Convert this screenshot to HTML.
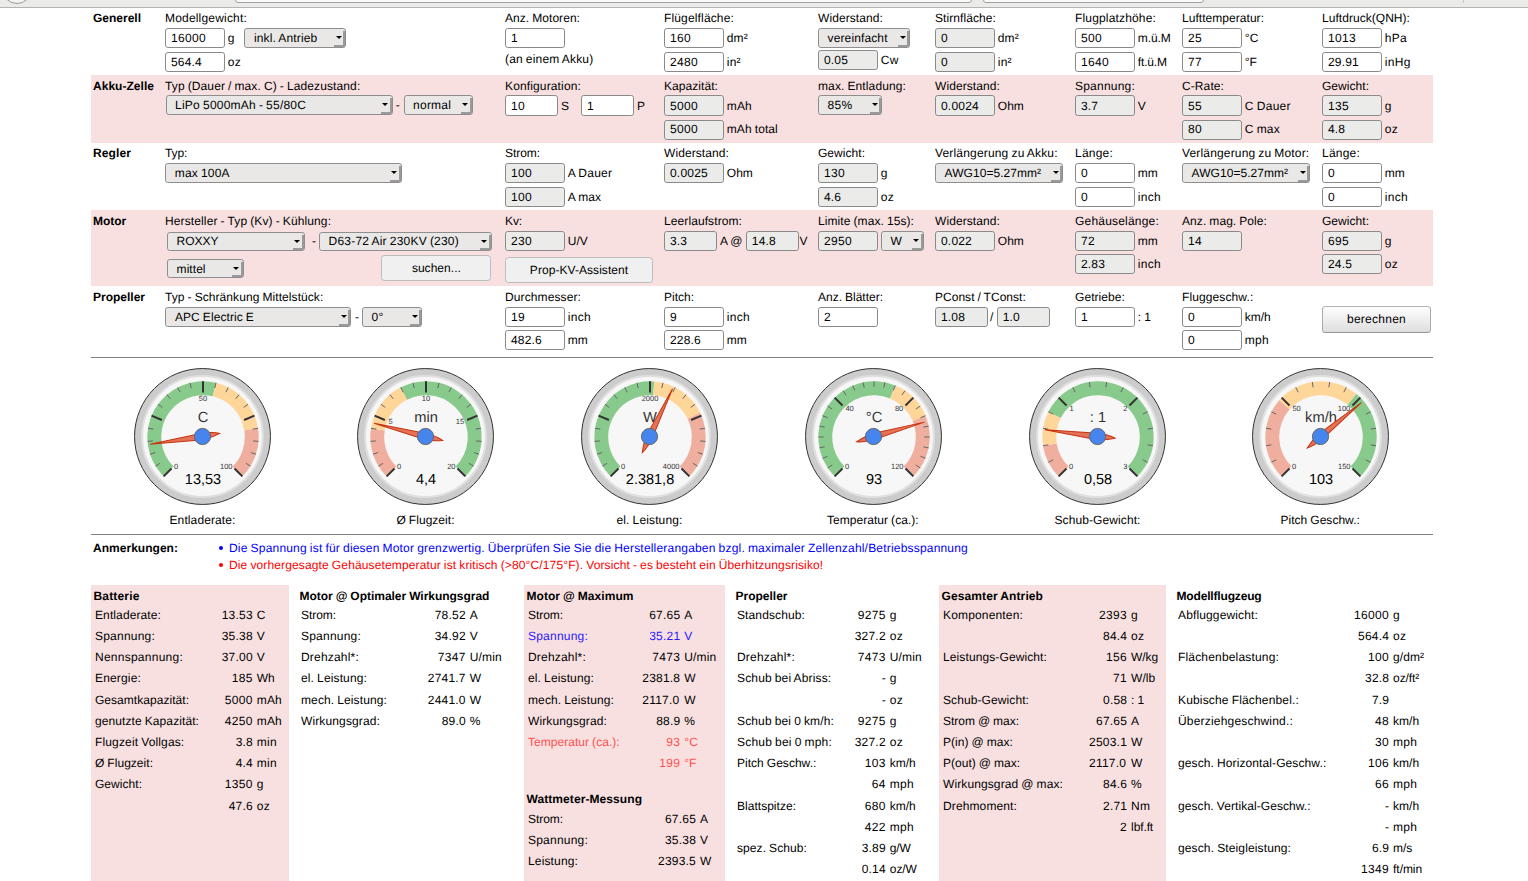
<!DOCTYPE html>
<html lang="de"><head><meta charset="utf-8"><title>propCalc</title>
<style>
html,body{margin:0;padding:0;background:#fff;}
body{width:1528px;height:881px;overflow:hidden;position:relative;font-family:"Liberation Sans",Arial,sans-serif;font-size:12px;line-height:14px;color:#000;text-rendering:geometricPrecision;font-kerning:normal;}
.t{position:absolute;white-space:pre;line-height:14px;}
.b{font-weight:bold;}
.box{position:absolute;}
.in{position:absolute;box-sizing:border-box;border:1px solid #8a8a8a;border-radius:2.8px;background:#fff;white-space:pre;overflow:hidden;}
.in.ro{background:#ebebea;}
.sel{position:absolute;box-sizing:border-box;border:1px solid #8e8e8e;border-radius:2.8px;background:#e9e8e6;white-space:pre;overflow:hidden;}
.sel i{position:absolute;right:3.2px;top:7.2px;width:0;height:0;border-left:3px solid transparent;border-right:3px solid transparent;border-top:3.7px solid #000;}
.sel b{position:absolute;right:0;top:1.5px;bottom:0;width:2px;background:#9a9a9a;}
.sel u{position:absolute;right:0;bottom:0;width:11px;height:1.6px;background:#9a9a9a;}
.btn{position:absolute;box-sizing:border-box;border:1px solid #bcbcbc;border-radius:3.5px;background:#f0f0f0;text-align:center;white-space:pre;}
.btn.g{background:linear-gradient(#fdfdfd,#f0f0f0 45%,#dedede);border-color:#b4b4b4 #aaaaaa #959595 #aaaaaa;}
.hr{position:absolute;left:91px;width:1342px;height:1px;background:#808080;}
.dot{position:absolute;width:4.5px;height:4.5px;border-radius:50%;}
#gauges{position:absolute;left:0;top:0;}
#chrome{position:absolute;left:0;top:0;width:1528px;height:7px;background:#ebebe9;border-bottom:1px solid #b4b4b4;overflow:hidden;}
#chrome .circ{position:absolute;left:2px;top:-26px;width:28px;height:28px;border:1px solid #9a9a9a;border-radius:50%;background:#f4f4f3;}
#chrome .url{position:absolute;top:-20px;height:20.5px;border:1px solid #a0a0a0;border-radius:3px;background:#fafafa;}
#chrome .sep{position:absolute;left:1463px;top:0;width:1px;height:3px;background:#c8c8c8;}
</style></head>
<body>
<div id="chrome"><div class="circ"></div><div class="url" style="left:235px;width:735px"></div><div class="url" style="left:983px;width:219px"></div><div class="sep"></div></div>
<div class="box" style="left:91px;top:75px;width:1342px;height:68px;background:#f8e0e0"></div>
<div class="box" style="left:91px;top:210px;width:1342px;height:76px;background:#f8e0e0"></div>
<span class="t b" style="left:93px;top:11px;letter-spacing:-0.003px;">Generell</span>
<span class="t" style="left:165px;top:11px;letter-spacing:0.188px;">Modellgewicht:</span>
<div class="in" style="left:165.2px;top:28px;width:59.6px;height:20px;line-height:18px;padding-left:4.8px;letter-spacing:0.326px;">16000</div>
<span class="t" style="left:227.8px;top:31px;letter-spacing:0.326px;">g</span>
<div class="in" style="left:165.2px;top:52px;width:59.6px;height:20px;line-height:18px;padding-left:4.8px;letter-spacing:0.194px;">564.4</div>
<span class="t" style="left:227.8px;top:55px;letter-spacing:0.163px;">oz</span>
<div class="sel" style="left:244.4px;top:28px;width:101.5px;height:20px;line-height:18px;padding-left:8.6px;letter-spacing:0.137px;word-spacing:-0.471px;">inkl. Antrieb<b></b><u></u><i></i></div>
<span class="t" style="left:505px;top:11px;letter-spacing:0.053px;word-spacing:-0.387px;">Anz. Motoren:</span>
<div class="in" style="left:505.2px;top:28px;width:59.6px;height:20px;line-height:18px;padding-left:4.8px;letter-spacing:0.326px;">1</div>
<span class="t" style="left:505px;top:52px;letter-spacing:0.177px;word-spacing:-0.511px;">(an einem Akku)</span>
<span class="t" style="left:664px;top:11px;letter-spacing:0.151px;">Flügelfläche:</span>
<div class="in" style="left:664.2px;top:28px;width:59.6px;height:20px;line-height:18px;padding-left:4.8px;letter-spacing:0.326px;">160</div>
<span class="t" style="left:726.8px;top:31px;letter-spacing:0.111px;">dm²</span>
<div class="in" style="left:664.2px;top:52px;width:59.6px;height:20px;line-height:18px;padding-left:4.8px;letter-spacing:0.326px;">2480</div>
<span class="t" style="left:726.8px;top:55px;letter-spacing:0.221px;">in²</span>
<span class="t" style="left:818px;top:11px;letter-spacing:0.089px;">Widerstand:</span>
<div class="sel" style="left:818px;top:28px;width:91.7px;height:20px;line-height:18px;padding-left:8.6px;letter-spacing:0.118px;">vereinfacht<b></b><u></u><i></i></div>
<div class="in ro" style="left:818.2px;top:50px;width:59.6px;height:20px;line-height:18px;padding-left:4.8px;letter-spacing:0.161px;">0.05</div>
<span class="t" style="left:880.8px;top:53px;letter-spacing:0.334px;">Cw</span>
<span class="t" style="left:935px;top:11px;letter-spacing:0.081px;">Stirnfläche:</span>
<div class="in ro" style="left:935.2px;top:28px;width:59.6px;height:20px;line-height:18px;padding-left:4.8px;letter-spacing:0.326px;">0</div>
<span class="t" style="left:997.8px;top:31px;letter-spacing:0.111px;">dm²</span>
<div class="in ro" style="left:935.2px;top:52px;width:59.6px;height:20px;line-height:18px;padding-left:4.8px;letter-spacing:0.326px;">0</div>
<span class="t" style="left:997.8px;top:55px;letter-spacing:0.221px;">in²</span>
<span class="t" style="left:1075px;top:11px;letter-spacing:0.163px;">Flugplatzhöhe:</span>
<div class="in" style="left:1075.2px;top:28px;width:59.6px;height:20px;line-height:18px;padding-left:4.8px;letter-spacing:0.326px;">500</div>
<span class="t" style="left:1137.8px;top:31px;letter-spacing:-0.067px;">m.ü.M</span>
<div class="in" style="left:1075.2px;top:52px;width:59.6px;height:20px;line-height:18px;padding-left:4.8px;letter-spacing:0.326px;">1640</div>
<span class="t" style="left:1137.8px;top:55px;letter-spacing:-0.168px;">ft.ü.M</span>
<span class="t" style="left:1182px;top:11px;letter-spacing:0.042px;">Lufttemperatur:</span>
<div class="in" style="left:1182.2px;top:28px;width:59.6px;height:20px;line-height:18px;padding-left:4.8px;letter-spacing:0.326px;">25</div>
<span class="t" style="left:1244.8px;top:31px;letter-spacing:0.268px;">°C</span>
<div class="in" style="left:1182.2px;top:52px;width:59.6px;height:20px;line-height:18px;padding-left:4.8px;letter-spacing:0.326px;">77</div>
<span class="t" style="left:1244.8px;top:55px;letter-spacing:-0.064px;">°F</span>
<span class="t" style="left:1322px;top:11px;letter-spacing:0.043px;">Luftdruck(QNH):</span>
<div class="in" style="left:1322.2px;top:28px;width:59.6px;height:20px;line-height:18px;padding-left:4.8px;letter-spacing:0.326px;">1013</div>
<span class="t" style="left:1384.8px;top:31px;letter-spacing:0.216px;">hPa</span>
<div class="in" style="left:1322.2px;top:52px;width:59.6px;height:20px;line-height:18px;padding-left:4.8px;letter-spacing:0.194px;">29.91</div>
<span class="t" style="left:1384.8px;top:55px;letter-spacing:0.330px;">inHg</span>
<span class="t b" style="left:93px;top:79px;letter-spacing:0.031px;">Akku-Zelle</span>
<span class="t" style="left:165px;top:79px;letter-spacing:0.112px;word-spacing:-0.446px;">Typ (Dauer / max. C) - Ladezustand:</span>
<div class="sel" style="left:165.5px;top:95px;width:227px;height:20px;line-height:18px;padding-left:8.6px;letter-spacing:0.218px;word-spacing:-0.552px;">LiPo 5000mAh - 55/80C<b></b><u></u><i></i></div>
<span class="t" style="left:395.8px;top:98px;letter-spacing:0.004px;">-</span>
<div class="sel" style="left:403.5px;top:95px;width:69px;height:20px;line-height:18px;padding-left:8.6px;letter-spacing:0.220px;">normal<b></b><u></u><i></i></div>
<span class="t" style="left:505px;top:79px;letter-spacing:0.139px;">Konfiguration:</span>
<div class="in" style="left:505.2px;top:95px;width:52.6px;height:21px;line-height:20px;padding-left:4.8px;letter-spacing:0.326px;">10</div>
<span class="t" style="left:561px;top:99px;letter-spacing:-0.004px;">S</span>
<div class="in" style="left:581.2px;top:95px;width:52.6px;height:21px;line-height:20px;padding-left:4.8px;letter-spacing:0.326px;">1</div>
<span class="t" style="left:637px;top:99px;letter-spacing:-0.004px;">P</span>
<span class="t" style="left:664px;top:79px;letter-spacing:0.063px;">Kapazität:</span>
<div class="in ro" style="left:664.2px;top:95px;width:59.6px;height:21px;line-height:20px;padding-left:4.8px;letter-spacing:0.326px;">5000</div>
<span class="t" style="left:726.8px;top:99px;letter-spacing:0.109px;">mAh</span>
<div class="in ro" style="left:664.2px;top:120px;width:59.6px;height:20px;line-height:16px;padding-left:4.8px;letter-spacing:0.326px;">5000</div>
<span class="t" style="left:726.8px;top:122px;letter-spacing:0.081px;word-spacing:-0.415px;">mAh total</span>
<span class="t" style="left:818px;top:79px;letter-spacing:0.115px;word-spacing:-0.449px;">max. Entladung:</span>
<div class="sel" style="left:818px;top:95px;width:64px;height:20px;line-height:18px;padding-left:8.6px;letter-spacing:0.327px;">85%<b></b><u></u><i></i></div>
<span class="t" style="left:935px;top:79px;letter-spacing:0.089px;">Widerstand:</span>
<div class="in ro" style="left:935.2px;top:95px;width:59.6px;height:21px;line-height:20px;padding-left:4.8px;letter-spacing:0.216px;">0.0024</div>
<span class="t" style="left:997.8px;top:99px;letter-spacing:-0.001px;">Ohm</span>
<span class="t" style="left:1075px;top:79px;letter-spacing:0.216px;">Spannung:</span>
<div class="in ro" style="left:1075.2px;top:95px;width:59.6px;height:21px;line-height:20px;padding-left:4.8px;letter-spacing:0.106px;">3.7</div>
<span class="t" style="left:1137.8px;top:99px;letter-spacing:-0.004px;">V</span>
<span class="t" style="left:1182px;top:79px;letter-spacing:0.094px;">C-Rate:</span>
<div class="in ro" style="left:1182.2px;top:95px;width:59.6px;height:21px;line-height:20px;padding-left:4.8px;letter-spacing:0.326px;">55</div>
<span class="t" style="left:1244.8px;top:99px;letter-spacing:0.275px;word-spacing:-0.609px;">C Dauer</span>
<div class="in ro" style="left:1182.2px;top:120px;width:59.6px;height:20px;line-height:16px;padding-left:4.8px;letter-spacing:0.326px;">80</div>
<span class="t" style="left:1244.8px;top:122px;letter-spacing:0.166px;word-spacing:-0.500px;">C max</span>
<span class="t" style="left:1322px;top:79px;letter-spacing:0.040px;">Gewicht:</span>
<div class="in ro" style="left:1322.2px;top:95px;width:59.6px;height:21px;line-height:20px;padding-left:4.8px;letter-spacing:0.326px;">135</div>
<span class="t" style="left:1384.8px;top:99px;letter-spacing:0.326px;">g</span>
<div class="in ro" style="left:1322.2px;top:120px;width:59.6px;height:20px;line-height:16px;padding-left:4.8px;letter-spacing:0.106px;">4.8</div>
<span class="t" style="left:1384.8px;top:122px;letter-spacing:0.163px;">oz</span>
<span class="t b" style="left:93px;top:146px;letter-spacing:0.109px;">Regler</span>
<span class="t" style="left:165px;top:146px;letter-spacing:-0.084px;">Typ:</span>
<div class="sel" style="left:165.2px;top:163px;width:236.4px;height:20px;line-height:18px;padding-left:8.6px;letter-spacing:0.186px;word-spacing:-0.520px;">max 100A<b></b><u></u><i></i></div>
<span class="t" style="left:505px;top:146px;letter-spacing:-0.056px;">Strom:</span>
<div class="in ro" style="left:505.2px;top:163px;width:59.6px;height:20px;line-height:18px;padding-left:4.8px;letter-spacing:0.326px;">100</div>
<span class="t" style="left:567.8px;top:166px;letter-spacing:0.219px;word-spacing:-0.553px;">A Dauer</span>
<div class="in ro" style="left:505.2px;top:187px;width:59.6px;height:20px;line-height:18px;padding-left:4.8px;letter-spacing:0.326px;">100</div>
<span class="t" style="left:567.8px;top:190px;letter-spacing:0.082px;word-spacing:-0.416px;">A max</span>
<span class="t" style="left:664px;top:146px;letter-spacing:0.089px;">Widerstand:</span>
<div class="in ro" style="left:664.2px;top:163px;width:59.6px;height:20px;line-height:18px;padding-left:4.8px;letter-spacing:0.216px;">0.0025</div>
<span class="t" style="left:726.8px;top:166px;letter-spacing:-0.001px;">Ohm</span>
<span class="t" style="left:818px;top:146px;letter-spacing:0.040px;">Gewicht:</span>
<div class="in ro" style="left:818.2px;top:163px;width:59.6px;height:20px;line-height:18px;padding-left:4.8px;letter-spacing:0.326px;">130</div>
<span class="t" style="left:880.8px;top:166px;letter-spacing:0.326px;">g</span>
<div class="in ro" style="left:818.2px;top:187px;width:59.6px;height:20px;line-height:18px;padding-left:4.8px;letter-spacing:0.106px;">4.6</div>
<span class="t" style="left:880.8px;top:190px;letter-spacing:0.163px;">oz</span>
<span class="t" style="left:935px;top:146px;letter-spacing:0.172px;word-spacing:-0.506px;">Verlängerung zu Akku:</span>
<div class="sel" style="left:935px;top:163px;width:128px;height:20px;line-height:18px;padding-left:8.6px;letter-spacing:0.049px;">AWG10=5.27mm²<b></b><u></u><i></i></div>
<span class="t" style="left:1075px;top:146px;letter-spacing:0.216px;">Länge:</span>
<div class="in" style="left:1075.2px;top:163px;width:59.6px;height:20px;line-height:18px;padding-left:4.8px;letter-spacing:0.326px;">0</div>
<span class="t" style="left:1137.8px;top:166px;letter-spacing:0.004px;">mm</span>
<div class="in" style="left:1075.2px;top:187px;width:59.6px;height:20px;line-height:18px;padding-left:4.8px;letter-spacing:0.326px;">0</div>
<span class="t" style="left:1137.8px;top:190px;letter-spacing:0.247px;">inch</span>
<span class="t" style="left:1182px;top:146px;letter-spacing:0.163px;word-spacing:-0.497px;">Verlängerung zu Motor:</span>
<div class="sel" style="left:1182px;top:163px;width:128px;height:20px;line-height:18px;padding-left:8.6px;letter-spacing:0.049px;">AWG10=5.27mm²<b></b><u></u><i></i></div>
<span class="t" style="left:1322px;top:146px;letter-spacing:0.216px;">Länge:</span>
<div class="in" style="left:1322.2px;top:163px;width:59.6px;height:20px;line-height:18px;padding-left:4.8px;letter-spacing:0.326px;">0</div>
<span class="t" style="left:1384.8px;top:166px;letter-spacing:0.004px;">mm</span>
<div class="in" style="left:1322.2px;top:187px;width:59.6px;height:20px;line-height:18px;padding-left:4.8px;letter-spacing:0.326px;">0</div>
<span class="t" style="left:1384.8px;top:190px;letter-spacing:0.247px;">inch</span>
<span class="t b" style="left:93px;top:214px;letter-spacing:-0.064px;">Motor</span>
<span class="t" style="left:165px;top:214px;letter-spacing:0.122px;word-spacing:-0.456px;">Hersteller - Typ (Kv) - Kühlung:</span>
<div class="sel" style="left:167px;top:232px;width:137.5px;height:19px;line-height:16px;padding-left:8.6px;letter-spacing:-0.002px;">ROXXY<b></b><u></u><i></i></div>
<span class="t" style="left:312px;top:234px;letter-spacing:0.004px;">-</span>
<div class="sel" style="left:319px;top:232px;width:172.5px;height:19px;line-height:16px;padding-left:8.6px;letter-spacing:0.207px;word-spacing:-0.541px;">D63-72 Air 230KV (230)<b></b><u></u><i></i></div>
<div class="sel" style="left:167px;top:259px;width:76.5px;height:19px;line-height:18px;padding-left:8.6px;letter-spacing:0.055px;">mittel<b></b><u></u><i></i></div>
<div class="btn " style="left:381.4px;top:255px;width:110px;height:26px;line-height:24px;letter-spacing:0.034px;">suchen...</div>
<span class="t" style="left:505px;top:214px;letter-spacing:-0.113px;">Kv:</span>
<div class="in ro" style="left:505.2px;top:231px;width:59.6px;height:20px;line-height:18px;padding-left:4.8px;letter-spacing:0.326px;">230</div>
<span class="t" style="left:567.8px;top:234px;letter-spacing:-0.001px;">U/V</span>
<div class="btn " style="left:505px;top:257px;width:148px;height:26px;line-height:24px;letter-spacing:0.057px;">Prop-KV-Assistent</div>
<span class="t" style="left:664px;top:214px;letter-spacing:0.093px;">Leerlaufstrom:</span>
<div class="in ro" style="left:664.2px;top:231px;width:52.6px;height:20px;line-height:18px;padding-left:4.8px;letter-spacing:0.106px;">3.3</div>
<span class="t" style="left:720px;top:234px;letter-spacing:-0.093px;word-spacing:-0.241px;">A @</span>
<div class="in ro" style="left:746px;top:231px;width:52.6px;height:20px;line-height:18px;padding-left:4.8px;letter-spacing:0.161px;">14.8</div>
<span class="t" style="left:799.5px;top:234px;letter-spacing:-0.004px;">V</span>
<span class="t" style="left:818px;top:214px;letter-spacing:0.082px;word-spacing:-0.416px;">Limite (max. 15s):</span>
<div class="in ro" style="left:818.2px;top:231px;width:59.6px;height:20px;line-height:18px;padding-left:4.8px;letter-spacing:0.326px;">2950</div>
<div class="sel" style="left:881px;top:231px;width:42.5px;height:20px;line-height:18px;padding-left:8.6px;letter-spacing:-0.326px;">W<b></b><u></u><i></i></div>
<span class="t" style="left:935px;top:214px;letter-spacing:0.089px;">Widerstand:</span>
<div class="in ro" style="left:935.2px;top:231px;width:59.6px;height:20px;line-height:18px;padding-left:4.8px;letter-spacing:0.194px;">0.022</div>
<span class="t" style="left:997.8px;top:234px;letter-spacing:-0.001px;">Ohm</span>
<span class="t" style="left:1075px;top:214px;letter-spacing:0.200px;">Gehäuselänge:</span>
<div class="in ro" style="left:1075.2px;top:231px;width:59.6px;height:20px;line-height:18px;padding-left:4.8px;letter-spacing:0.326px;">72</div>
<span class="t" style="left:1137.8px;top:234px;letter-spacing:0.004px;">mm</span>
<div class="in ro" style="left:1075.2px;top:254px;width:59.6px;height:20px;line-height:18px;padding-left:4.8px;letter-spacing:0.161px;">2.83</div>
<span class="t" style="left:1137.8px;top:257px;letter-spacing:0.247px;">inch</span>
<span class="t" style="left:1182px;top:214px;letter-spacing:0.074px;word-spacing:-0.408px;">Anz. mag. Pole:</span>
<div class="in ro" style="left:1182.2px;top:231px;width:59.6px;height:20px;line-height:18px;padding-left:4.8px;letter-spacing:0.326px;">14</div>
<span class="t" style="left:1322px;top:214px;letter-spacing:0.040px;">Gewicht:</span>
<div class="in ro" style="left:1322.2px;top:231px;width:59.6px;height:20px;line-height:18px;padding-left:4.8px;letter-spacing:0.326px;">695</div>
<span class="t" style="left:1384.8px;top:234px;letter-spacing:0.326px;">g</span>
<div class="in ro" style="left:1322.2px;top:254px;width:59.6px;height:20px;line-height:18px;padding-left:4.8px;letter-spacing:0.161px;">24.5</div>
<span class="t" style="left:1384.8px;top:257px;letter-spacing:0.163px;">oz</span>
<span class="t b" style="left:93px;top:290px;letter-spacing:-0.002px;">Propeller</span>
<span class="t" style="left:165px;top:290px;letter-spacing:0.075px;word-spacing:-0.409px;">Typ - Schränkung Mittelstück:</span>
<div class="sel" style="left:165.3px;top:307px;width:185.5px;height:20px;line-height:18px;padding-left:8.6px;letter-spacing:0.082px;word-spacing:-0.416px;">APC Electric E<b></b><u></u><i></i></div>
<span class="t" style="left:355px;top:310px;letter-spacing:0.004px;">-</span>
<div class="sel" style="left:362px;top:307px;width:60px;height:20px;line-height:18px;padding-left:8.6px;letter-spacing:0.264px;">0°<b></b><u></u><i></i></div>
<span class="t" style="left:505px;top:290px;letter-spacing:0.110px;">Durchmesser:</span>
<div class="in" style="left:505.2px;top:307px;width:59.6px;height:20px;line-height:18px;padding-left:4.8px;letter-spacing:0.326px;">19</div>
<span class="t" style="left:567.8px;top:310px;letter-spacing:0.247px;">inch</span>
<div class="in" style="left:505.2px;top:330px;width:59.6px;height:20px;line-height:18px;padding-left:4.8px;letter-spacing:0.194px;">482.6</div>
<span class="t" style="left:567.8px;top:333px;letter-spacing:0.004px;">mm</span>
<span class="t" style="left:664px;top:290px;letter-spacing:-0.002px;">Pitch:</span>
<div class="in" style="left:664.2px;top:307px;width:59.6px;height:20px;line-height:18px;padding-left:4.8px;letter-spacing:0.326px;">9</div>
<span class="t" style="left:726.8px;top:310px;letter-spacing:0.247px;">inch</span>
<div class="in" style="left:664.2px;top:330px;width:59.6px;height:20px;line-height:18px;padding-left:4.8px;letter-spacing:0.194px;">228.6</div>
<span class="t" style="left:726.8px;top:333px;letter-spacing:0.004px;">mm</span>
<span class="t" style="left:818px;top:290px;letter-spacing:-0.002px;word-spacing:-0.332px;">Anz. Blätter:</span>
<div class="in" style="left:818.2px;top:307px;width:59.6px;height:20px;line-height:18px;padding-left:4.8px;letter-spacing:0.326px;">2</div>
<span class="t" style="left:935px;top:290px;letter-spacing:0.022px;word-spacing:-0.356px;">PConst / TConst:</span>
<div class="in ro" style="left:935.2px;top:307px;width:52.6px;height:20px;line-height:18px;padding-left:4.8px;letter-spacing:0.161px;">1.08</div>
<span class="t" style="left:990px;top:310px;letter-spacing:-0.334px;">/</span>
<div class="in ro" style="left:997px;top:307px;width:52.6px;height:20px;line-height:18px;padding-left:4.8px;letter-spacing:0.106px;">1.0</div>
<span class="t" style="left:1075px;top:290px;letter-spacing:0.071px;">Getriebe:</span>
<div class="in" style="left:1075.2px;top:307px;width:59.6px;height:20px;line-height:18px;padding-left:4.8px;letter-spacing:0.326px;">1</div>
<span class="t" style="left:1137.8px;top:310px;letter-spacing:-0.004px;word-spacing:-0.330px;">: 1</span>
<span class="t" style="left:1182px;top:290px;letter-spacing:0.108px;">Fluggeschw.:</span>
<div class="in" style="left:1182.2px;top:307px;width:59.6px;height:20px;line-height:18px;padding-left:4.8px;letter-spacing:0.326px;">0</div>
<span class="t" style="left:1244.8px;top:310px;letter-spacing:-0.001px;">km/h</span>
<div class="in" style="left:1182.2px;top:330px;width:59.6px;height:20px;line-height:18px;padding-left:4.8px;letter-spacing:0.326px;">0</div>
<span class="t" style="left:1244.8px;top:333px;letter-spacing:0.219px;">mph</span>
<div class="btn g" style="left:1322px;top:306px;width:109px;height:27px;line-height:25px;letter-spacing:0.254px;">berechnen</div>
<div class="hr" style="top:357px"></div>
<div class="hr" style="top:534px"></div>
<svg id="gauges" width="1528" height="881" viewBox="0 0 1528 881" font-family="Liberation Sans, Arial, sans-serif"><g transform="translate(202.5,436.5)">
<circle r="67.95" fill="#cccccc" stroke="#333333" stroke-width="1"/>
<circle r="60.4" fill="#f7f7f7" stroke="#e0e0e0" stroke-width="2"/>
<g transform="translate(0.5,0.5)">
<path d="M-39.39,39.39A55.7,55.7 0 0 1 13.00,-54.16L9.76,-40.65A41.8,41.8 0 0 0 -29.56,29.56Z" fill="#88c98c"/>
<path d="M13.00,-54.16A55.7,55.7 0 0 1 55.01,-8.71L41.29,-6.54A41.8,41.8 0 0 0 9.76,-40.65Z" fill="#ffd699"/>
<path d="M55.01,-8.71A55.7,55.7 0 0 1 39.39,39.39L29.56,29.56A41.8,41.8 0 0 0 41.29,-6.54Z" fill="#f0ae9e"/>
<text y="-14.6" text-anchor="middle" font-size="14.7" fill="#333">C</text>
<path d="M-47.49,29.10L-42.89,26.28M-52.97,17.21L-47.84,15.54M-55.53,4.37L-50.14,3.95M-55.01,-8.71L-49.68,-7.87M-45.06,-32.74L-40.69,-29.57M-36.17,-42.35L-32.67,-38.25M-25.29,-49.63L-22.84,-44.82M-13.00,-54.16L-11.74,-48.91M13.00,-54.16L11.74,-48.91M25.29,-49.63L22.84,-44.82M36.17,-42.35L32.67,-38.25M45.06,-32.74L40.69,-29.57M55.01,-8.71L49.68,-7.87M55.53,4.37L50.14,3.95M52.97,17.21L47.84,15.54M47.49,29.10L42.89,26.28" stroke="#666666" stroke-width="1" fill="none"/>
<path d="M-39.39,39.39L-31.47,31.47M-51.46,-21.32L-41.11,-17.03M0.00,-55.70L0.00,-44.50M51.46,-21.32L41.11,-17.03M39.39,39.39L31.47,31.47" stroke="#333333" stroke-width="2" fill="none"/>
<text x="-29.0" y="32.1" text-anchor="start" font-size="7.5" fill="#333">0</text>
<text x="0.0" y="-36.0" text-anchor="middle" font-size="7.5" fill="#333">50</text>
<text x="29.5" y="32.1" text-anchor="end" font-size="7.5" fill="#333">100</text>
<text y="46.9" text-anchor="middle" font-size="14.5" fill="#000">13,53</text>
</g>
<g transform="rotate(-188.47)"><path d="M53.00,0 L0,3.2 C-6,3.2 -13,2.4 -17.6,0.5 C-13,-1 -6,-3.2 0,-3.2 Z" fill="#dc3912" fill-opacity="0.7" stroke="#c63310" stroke-width="1"/></g>
<circle r="8.1" fill="#4684ee" stroke="#666666" stroke-width="1"/>
</g>
<g transform="translate(425.5,436.5)">
<circle r="67.95" fill="#cccccc" stroke="#333333" stroke-width="1"/>
<circle r="60.4" fill="#f7f7f7" stroke="#e0e0e0" stroke-width="2"/>
<g transform="translate(0.5,0.5)">
<path d="M-39.39,39.39A55.7,55.7 0 0 1 -55.01,-8.71L-41.29,-6.54A41.8,41.8 0 0 0 -29.56,29.56Z" fill="#f0ae9e"/>
<path d="M-55.01,-8.71A55.7,55.7 0 0 1 -25.29,-49.63L-18.98,-37.24A41.8,41.8 0 0 0 -41.29,-6.54Z" fill="#ffd699"/>
<path d="M-25.29,-49.63A55.7,55.7 0 0 1 39.39,39.39L29.56,29.56A41.8,41.8 0 0 0 -18.98,-37.24Z" fill="#88c98c"/>
<text y="-14.6" text-anchor="middle" font-size="14.7" fill="#333">min</text>
<path d="M-47.49,29.10L-42.89,26.28M-52.97,17.21L-47.84,15.54M-55.53,4.37L-50.14,3.95M-55.01,-8.71L-49.68,-7.87M-45.06,-32.74L-40.69,-29.57M-36.17,-42.35L-32.67,-38.25M-25.29,-49.63L-22.84,-44.82M-13.00,-54.16L-11.74,-48.91M13.00,-54.16L11.74,-48.91M25.29,-49.63L22.84,-44.82M36.17,-42.35L32.67,-38.25M45.06,-32.74L40.69,-29.57M55.01,-8.71L49.68,-7.87M55.53,4.37L50.14,3.95M52.97,17.21L47.84,15.54M47.49,29.10L42.89,26.28" stroke="#666666" stroke-width="1" fill="none"/>
<path d="M-39.39,39.39L-31.47,31.47M-51.46,-21.32L-41.11,-17.03M0.00,-55.70L0.00,-44.50M51.46,-21.32L41.11,-17.03M39.39,39.39L31.47,31.47" stroke="#333333" stroke-width="2" fill="none"/>
<text x="-29.0" y="32.1" text-anchor="start" font-size="7.5" fill="#333">0</text>
<text x="-37.4" y="-13.0" text-anchor="start" font-size="7.5" fill="#333">5</text>
<text x="0.0" y="-36.0" text-anchor="middle" font-size="7.5" fill="#333">10</text>
<text x="38.2" y="-13.0" text-anchor="end" font-size="7.5" fill="#333">15</text>
<text x="29.5" y="32.1" text-anchor="end" font-size="7.5" fill="#333">20</text>
<text y="46.9" text-anchor="middle" font-size="14.5" fill="#000">4,4</text>
</g>
<g transform="rotate(-165.60)"><path d="M53.00,0 L0,3.2 C-6,3.2 -13,2.4 -17.6,0.5 C-13,-1 -6,-3.2 0,-3.2 Z" fill="#dc3912" fill-opacity="0.7" stroke="#c63310" stroke-width="1"/></g>
<circle r="8.1" fill="#4684ee" stroke="#666666" stroke-width="1"/>
</g>
<g transform="translate(649.5,436.5)">
<circle r="67.95" fill="#cccccc" stroke="#333333" stroke-width="1"/>
<circle r="60.4" fill="#f7f7f7" stroke="#e0e0e0" stroke-width="2"/>
<g transform="translate(0.5,0.5)">
<path d="M-39.39,39.39A55.7,55.7 0 0 1 4.26,-55.54L3.20,-41.68A41.8,41.8 0 0 0 -29.56,29.56Z" fill="#88c98c"/>
<path d="M4.26,-55.54A55.7,55.7 0 0 1 50.12,-24.31L37.61,-18.24A41.8,41.8 0 0 0 3.20,-41.68Z" fill="#ffd699"/>
<path d="M50.12,-24.31A55.7,55.7 0 0 1 39.39,39.39L29.56,29.56A41.8,41.8 0 0 0 37.61,-18.24Z" fill="#f0ae9e"/>
<text y="-14.6" text-anchor="middle" font-size="14.7" fill="#333">W</text>
<path d="M-47.49,29.10L-42.89,26.28M-52.97,17.21L-47.84,15.54M-55.53,4.37L-50.14,3.95M-55.01,-8.71L-49.68,-7.87M-45.06,-32.74L-40.69,-29.57M-36.17,-42.35L-32.67,-38.25M-25.29,-49.63L-22.84,-44.82M-13.00,-54.16L-11.74,-48.91M13.00,-54.16L11.74,-48.91M25.29,-49.63L22.84,-44.82M36.17,-42.35L32.67,-38.25M45.06,-32.74L40.69,-29.57M55.01,-8.71L49.68,-7.87M55.53,4.37L50.14,3.95M52.97,17.21L47.84,15.54M47.49,29.10L42.89,26.28" stroke="#666666" stroke-width="1" fill="none"/>
<path d="M-39.39,39.39L-31.47,31.47M-51.46,-21.32L-41.11,-17.03M0.00,-55.70L0.00,-44.50M51.46,-21.32L41.11,-17.03M39.39,39.39L31.47,31.47" stroke="#333333" stroke-width="2" fill="none"/>
<text x="-29.0" y="32.1" text-anchor="start" font-size="7.5" fill="#333">0</text>
<text x="0.0" y="-36.0" text-anchor="middle" font-size="7.5" fill="#333">2000</text>
<text x="29.5" y="32.1" text-anchor="end" font-size="7.5" fill="#333">4000</text>
<text y="46.9" text-anchor="middle" font-size="14.5" fill="#000">2.381,8</text>
</g>
<g transform="rotate(-64.23)"><path d="M53.00,0 L0,3.2 C-6,3.2 -13,2.4 -17.6,0.5 C-13,-1 -6,-3.2 0,-3.2 Z" fill="#dc3912" fill-opacity="0.7" stroke="#c63310" stroke-width="1"/></g>
<circle r="8.1" fill="#4684ee" stroke="#666666" stroke-width="1"/>
</g>
<g transform="translate(873.5,436.5)">
<circle r="67.95" fill="#cccccc" stroke="#333333" stroke-width="1"/>
<circle r="60.4" fill="#f7f7f7" stroke="#e0e0e0" stroke-width="2"/>
<g transform="translate(0.5,0.5)">
<path d="M-39.39,39.39A55.7,55.7 0 0 1 21.32,-51.46L16.00,-38.62A41.8,41.8 0 0 0 -29.56,29.56Z" fill="#88c98c"/>
<path d="M21.32,-51.46A55.7,55.7 0 0 1 51.46,-21.32L38.62,-16.00A41.8,41.8 0 0 0 16.00,-38.62Z" fill="#ffd699"/>
<path d="M51.46,-21.32A55.7,55.7 0 0 1 39.39,39.39L29.56,29.56A41.8,41.8 0 0 0 38.62,-16.00Z" fill="#f0ae9e"/>
<text y="-14.6" text-anchor="middle" font-size="14.7" fill="#333">°C</text>
<path d="M-46.31,30.95L-41.82,27.95M-51.46,21.32L-46.47,19.25M-54.63,10.87L-49.33,9.81M-55.70,-0.00L-50.30,-0.00M-54.63,-10.87L-49.33,-9.81M-51.46,-21.32L-46.47,-19.25M-46.31,-30.95L-41.82,-27.95M-30.95,-46.31L-27.95,-41.82M-21.32,-51.46L-19.25,-46.47M-10.87,-54.63L-9.81,-49.33M0.00,-55.70L0.00,-50.30M10.87,-54.63L9.81,-49.33M21.32,-51.46L19.25,-46.47M30.95,-46.31L27.95,-41.82M46.31,-30.95L41.82,-27.95M51.46,-21.32L46.47,-19.25M54.63,-10.87L49.33,-9.81M55.70,-0.00L50.30,-0.00M54.63,10.87L49.33,9.81M51.46,21.32L46.47,19.25M46.31,30.95L41.82,27.95" stroke="#666666" stroke-width="1" fill="none"/>
<path d="M-39.39,39.39L-31.47,31.47M-39.39,-39.39L-31.47,-31.47M39.39,-39.39L31.47,-31.47M39.39,39.39L31.47,31.47" stroke="#333333" stroke-width="2" fill="none"/>
<text x="-29.0" y="32.1" text-anchor="start" font-size="7.5" fill="#333">0</text>
<text x="-28.6" y="-26.4" text-anchor="start" font-size="7.5" fill="#333">40</text>
<text x="29.3" y="-26.4" text-anchor="end" font-size="7.5" fill="#333">80</text>
<text x="29.5" y="32.1" text-anchor="end" font-size="7.5" fill="#333">120</text>
<text y="46.9" text-anchor="middle" font-size="14.5" fill="#000">93</text>
</g>
<g transform="rotate(-15.75)"><path d="M53.00,0 L0,3.2 C-6,3.2 -13,2.4 -17.6,0.5 C-13,-1 -6,-3.2 0,-3.2 Z" fill="#dc3912" fill-opacity="0.7" stroke="#c63310" stroke-width="1"/></g>
<circle r="8.1" fill="#4684ee" stroke="#666666" stroke-width="1"/>
</g>
<g transform="translate(1097.5,436.5)">
<circle r="67.95" fill="#cccccc" stroke="#333333" stroke-width="1"/>
<circle r="60.4" fill="#f7f7f7" stroke="#e0e0e0" stroke-width="2"/>
<g transform="translate(0.5,0.5)">
<path d="M-39.39,39.39A55.7,55.7 0 0 1 -55.01,8.71L-41.29,6.54A41.8,41.8 0 0 0 -29.56,29.56Z" fill="#f0ae9e"/>
<path d="M-55.01,8.71A55.7,55.7 0 0 1 -49.63,-25.29L-37.24,-18.98A41.8,41.8 0 0 0 -41.29,6.54Z" fill="#ffd699"/>
<path d="M-49.63,-25.29A55.7,55.7 0 1 1 39.39,39.39L29.56,29.56A41.8,41.8 0 1 0 -37.24,-18.98Z" fill="#88c98c"/>
<text y="-14.6" text-anchor="middle" font-size="14.7" fill="#333">: 1</text>
<path d="M-49.63,25.29L-44.82,22.84M-55.01,8.71L-49.68,7.87M-55.01,-8.71L-49.68,-7.87M-49.63,-25.29L-44.82,-22.84M-25.29,-49.63L-22.84,-44.82M-8.71,-55.01L-7.87,-49.68M8.71,-55.01L7.87,-49.68M25.29,-49.63L22.84,-44.82M49.63,-25.29L44.82,-22.84M55.01,-8.71L49.68,-7.87M55.01,8.71L49.68,7.87M49.63,25.29L44.82,22.84" stroke="#666666" stroke-width="1" fill="none"/>
<path d="M-39.39,39.39L-31.47,31.47M-39.39,-39.39L-31.47,-31.47M39.39,-39.39L31.47,-31.47M39.39,39.39L31.47,31.47" stroke="#333333" stroke-width="2" fill="none"/>
<text x="-29.0" y="32.1" text-anchor="start" font-size="7.5" fill="#333">0</text>
<text x="-28.6" y="-26.4" text-anchor="start" font-size="7.5" fill="#333">1</text>
<text x="29.3" y="-26.4" text-anchor="end" font-size="7.5" fill="#333">2</text>
<text x="29.5" y="32.1" text-anchor="end" font-size="7.5" fill="#333">3</text>
<text y="46.9" text-anchor="middle" font-size="14.5" fill="#000">0,58</text>
</g>
<g transform="rotate(-172.80)"><path d="M53.00,0 L0,3.2 C-6,3.2 -13,2.4 -17.6,0.5 C-13,-1 -6,-3.2 0,-3.2 Z" fill="#dc3912" fill-opacity="0.7" stroke="#c63310" stroke-width="1"/></g>
<circle r="8.1" fill="#4684ee" stroke="#666666" stroke-width="1"/>
</g>
<g transform="translate(1320.5,436.5)">
<circle r="67.95" fill="#cccccc" stroke="#333333" stroke-width="1"/>
<circle r="60.4" fill="#f7f7f7" stroke="#e0e0e0" stroke-width="2"/>
<g transform="translate(0.5,0.5)">
<path d="M-39.39,39.39A55.7,55.7 0 0 1 -41.78,-36.84L-31.35,-27.64A41.8,41.8 0 0 0 -29.56,29.56Z" fill="#f0ae9e"/>
<path d="M-41.78,-36.84A55.7,55.7 0 0 1 35.50,-42.92L26.64,-32.21A41.8,41.8 0 0 0 -31.35,-27.64Z" fill="#ffd699"/>
<path d="M35.50,-42.92A55.7,55.7 0 0 1 39.39,39.39L29.56,29.56A41.8,41.8 0 0 0 26.64,-32.21Z" fill="#88c98c"/>
<text y="-14.6" text-anchor="middle" font-size="14.7" fill="#333">km/h</text>
<path d="M-49.63,25.29L-44.82,22.84M-55.01,8.71L-49.68,7.87M-55.01,-8.71L-49.68,-7.87M-49.63,-25.29L-44.82,-22.84M-25.29,-49.63L-22.84,-44.82M-8.71,-55.01L-7.87,-49.68M8.71,-55.01L7.87,-49.68M25.29,-49.63L22.84,-44.82M49.63,-25.29L44.82,-22.84M55.01,-8.71L49.68,-7.87M55.01,8.71L49.68,7.87M49.63,25.29L44.82,22.84" stroke="#666666" stroke-width="1" fill="none"/>
<path d="M-39.39,39.39L-31.47,31.47M-39.39,-39.39L-31.47,-31.47M39.39,-39.39L31.47,-31.47M39.39,39.39L31.47,31.47" stroke="#333333" stroke-width="2" fill="none"/>
<text x="-29.0" y="32.1" text-anchor="start" font-size="7.5" fill="#333">0</text>
<text x="-28.6" y="-26.4" text-anchor="start" font-size="7.5" fill="#333">50</text>
<text x="29.3" y="-26.4" text-anchor="end" font-size="7.5" fill="#333">100</text>
<text x="29.5" y="32.1" text-anchor="end" font-size="7.5" fill="#333">150</text>
<text y="46.9" text-anchor="middle" font-size="14.5" fill="#000">103</text>
</g>
<g transform="rotate(-39.60)"><path d="M53.00,0 L0,3.2 C-6,3.2 -13,2.4 -17.6,0.5 C-13,-1 -6,-3.2 0,-3.2 Z" fill="#dc3912" fill-opacity="0.7" stroke="#c63310" stroke-width="1"/></g>
<circle r="8.1" fill="#4684ee" stroke="#666666" stroke-width="1"/>
</g></svg>
<span class="t" style="left:169.5px;top:513px;letter-spacing:0.107px;">Entladerate:</span>
<span class="t" style="left:396.5px;top:513px;letter-spacing:0.031px;word-spacing:-0.365px;">Ø Flugzeit:</span>
<span class="t" style="left:616.5px;top:513px;letter-spacing:0.135px;word-spacing:-0.469px;">el. Leistung:</span>
<span class="t" style="left:827px;top:513px;letter-spacing:0.040px;word-spacing:-0.374px;">Temperatur (ca.):</span>
<span class="t" style="left:1054.5px;top:513px;letter-spacing:0.093px;">Schub-Gewicht:</span>
<span class="t" style="left:1280.5px;top:513px;letter-spacing:0.024px;word-spacing:-0.358px;">Pitch Geschw.:</span>
<span class="t b" style="left:93px;top:541px;letter-spacing:0.027px;">Anmerkungen:</span>
<div class="dot" style="left:218.5px;top:545.5px;background:#0000ff"></div>
<div class="dot" style="left:218.5px;top:562.5px;background:#ff0000"></div>
<span class="t" style="left:229px;top:541px;letter-spacing:0.193px;word-spacing:-0.527px;color:#0000ff">Die Spannung ist für diesen Motor grenzwertig. Überprüfen Sie Sie die Herstellerangaben bzgl. maximaler Zellenzahl/Betriebsspannung</span>
<span class="t" style="left:229px;top:558px;letter-spacing:0.134px;word-spacing:-0.468px;color:#ff0000">Die vorhergesagte Gehäusetemperatur ist kritisch (&gt;80°C/175°F). Vorsicht - es besteht ein Überhitzungsrisiko!</span>
<div class="box" style="left:91px;top:585px;width:198px;height:300px;background:#f8e0e0"></div>
<div class="box" style="left:524px;top:585px;width:201px;height:300px;background:#f8e0e0"></div>
<div class="box" style="left:939px;top:585px;width:227px;height:300px;background:#f8e0e0"></div>
<span class="t b" style="left:93.5px;top:589px;letter-spacing:0.165px;">Batterie</span>
<span class="t" style="left:95px;top:608px;letter-spacing:0.107px;">Entladerate:</span>
<span class="t" style="left:221.75px;top:608px;letter-spacing:0.194px;">13.53</span>
<span class="t" style="left:256.8px;top:608px;letter-spacing:0.334px;">C</span>
<span class="t" style="left:95px;top:629px;letter-spacing:0.216px;">Spannung:</span>
<span class="t" style="left:221.75px;top:629px;letter-spacing:0.194px;">35.38</span>
<span class="t" style="left:256.8px;top:629px;letter-spacing:-0.004px;">V</span>
<span class="t" style="left:95px;top:650px;letter-spacing:0.251px;">Nennspannung:</span>
<span class="t" style="left:221.75px;top:650px;letter-spacing:0.194px;">37.00</span>
<span class="t" style="left:256.8px;top:650px;letter-spacing:-0.004px;">V</span>
<span class="t" style="left:95px;top:671px;letter-spacing:0.163px;">Energie:</span>
<span class="t" style="left:231.75px;top:671px;letter-spacing:0.326px;">185</span>
<span class="t" style="left:256.8px;top:671px;letter-spacing:0.000px;">Wh</span>
<span class="t" style="left:95px;top:693px;letter-spacing:0.039px;">Gesamtkapazität:</span>
<span class="t" style="left:224.75px;top:693px;letter-spacing:0.326px;">5000</span>
<span class="t" style="left:256.8px;top:693px;letter-spacing:0.109px;">mAh</span>
<span class="t" style="left:95px;top:714px;letter-spacing:0.089px;word-spacing:-0.423px;">genutzte Kapazität:</span>
<span class="t" style="left:224.75px;top:714px;letter-spacing:0.326px;">4250</span>
<span class="t" style="left:256.8px;top:714px;letter-spacing:0.109px;">mAh</span>
<span class="t" style="left:95px;top:735px;letter-spacing:0.143px;word-spacing:-0.477px;">Flugzeit Vollgas:</span>
<span class="t" style="left:235.75px;top:735px;letter-spacing:0.106px;">3.8</span>
<span class="t" style="left:256.8px;top:735px;letter-spacing:0.221px;">min</span>
<span class="t" style="left:95px;top:756px;letter-spacing:0.031px;word-spacing:-0.365px;">Ø Flugzeit:</span>
<span class="t" style="left:235.75px;top:756px;letter-spacing:0.106px;">4.4</span>
<span class="t" style="left:256.8px;top:756px;letter-spacing:0.221px;">min</span>
<span class="t" style="left:95px;top:777px;letter-spacing:0.040px;">Gewicht:</span>
<span class="t" style="left:224.75px;top:777px;letter-spacing:0.326px;">1350</span>
<span class="t" style="left:256.8px;top:777px;letter-spacing:0.326px;">g</span>
<span class="t" style="left:228.75px;top:799px;letter-spacing:0.161px;">47.6</span>
<span class="t" style="left:256.8px;top:799px;letter-spacing:0.163px;">oz</span>
<span class="t b" style="left:299.5px;top:589px;letter-spacing:-0.026px;word-spacing:-0.308px;">Motor @ Optimaler Wirkungsgrad</span>
<span class="t" style="left:301px;top:608px;letter-spacing:-0.056px;">Strom:</span>
<span class="t" style="left:434.75px;top:608px;letter-spacing:0.194px;">78.52</span>
<span class="t" style="left:469.8px;top:608px;letter-spacing:-0.004px;">A</span>
<span class="t" style="left:301px;top:629px;letter-spacing:0.216px;">Spannung:</span>
<span class="t" style="left:434.75px;top:629px;letter-spacing:0.194px;">34.92</span>
<span class="t" style="left:469.8px;top:629px;letter-spacing:-0.004px;">V</span>
<span class="t" style="left:301px;top:650px;letter-spacing:0.197px;">Drehzahl*:</span>
<span class="t" style="left:437.75px;top:650px;letter-spacing:0.326px;">7347</span>
<span class="t" style="left:469.8px;top:650px;letter-spacing:0.133px;">U/min</span>
<span class="t" style="left:301px;top:671px;letter-spacing:0.135px;word-spacing:-0.469px;">el. Leistung:</span>
<span class="t" style="left:427.75px;top:671px;letter-spacing:0.216px;">2741.7</span>
<span class="t" style="left:469.8px;top:671px;letter-spacing:-0.326px;">W</span>
<span class="t" style="left:301px;top:693px;letter-spacing:0.116px;word-spacing:-0.450px;">mech. Leistung:</span>
<span class="t" style="left:427.75px;top:693px;letter-spacing:0.216px;">2441.0</span>
<span class="t" style="left:469.8px;top:693px;letter-spacing:-0.326px;">W</span>
<span class="t" style="left:301px;top:714px;letter-spacing:0.126px;">Wirkungsgrad:</span>
<span class="t" style="left:441.75px;top:714px;letter-spacing:0.161px;">89.0</span>
<span class="t" style="left:469.8px;top:714px;letter-spacing:0.330px;">%</span>
<span class="t b" style="left:526.5px;top:589px;letter-spacing:0.048px;word-spacing:-0.382px;">Motor @ Maximum</span>
<span class="t" style="left:528px;top:608px;letter-spacing:-0.056px;">Strom:</span>
<span class="t" style="left:649.25px;top:608px;letter-spacing:0.194px;">67.65</span>
<span class="t" style="left:684.3px;top:608px;letter-spacing:-0.004px;">A</span>
<span class="t" style="left:528px;top:629px;letter-spacing:0.216px;color:#2a1aff">Spannung:</span>
<span class="t" style="left:649.25px;top:629px;letter-spacing:0.194px;color:#2a1aff">35.21</span>
<span class="t" style="left:684.3px;top:629px;letter-spacing:-0.004px;color:#2a1aff">V</span>
<span class="t" style="left:528px;top:650px;letter-spacing:0.197px;">Drehzahl*:</span>
<span class="t" style="left:652.25px;top:650px;letter-spacing:0.326px;">7473</span>
<span class="t" style="left:684.3px;top:650px;letter-spacing:0.133px;">U/min</span>
<span class="t" style="left:528px;top:671px;letter-spacing:0.135px;word-spacing:-0.469px;">el. Leistung:</span>
<span class="t" style="left:642.25px;top:671px;letter-spacing:0.216px;">2381.8</span>
<span class="t" style="left:684.3px;top:671px;letter-spacing:-0.326px;">W</span>
<span class="t" style="left:528px;top:693px;letter-spacing:0.116px;word-spacing:-0.450px;">mech. Leistung:</span>
<span class="t" style="left:642.25px;top:693px;letter-spacing:0.216px;">2117.0</span>
<span class="t" style="left:684.3px;top:693px;letter-spacing:-0.326px;">W</span>
<span class="t" style="left:528px;top:714px;letter-spacing:0.126px;">Wirkungsgrad:</span>
<span class="t" style="left:656.25px;top:714px;letter-spacing:0.161px;">88.9</span>
<span class="t" style="left:684.3px;top:714px;letter-spacing:0.330px;">%</span>
<span class="t" style="left:528px;top:735px;letter-spacing:0.040px;word-spacing:-0.374px;color:#ff5050">Temperatur (ca.):</span>
<span class="t" style="left:666.25px;top:735px;letter-spacing:0.326px;color:#ff5050">93</span>
<span class="t" style="left:684.3px;top:735px;letter-spacing:0.268px;color:#ff5050">°C</span>
<span class="t" style="left:659.25px;top:756px;letter-spacing:0.326px;color:#ff5050">199</span>
<span class="t" style="left:684.3px;top:756px;letter-spacing:-0.064px;color:#ff5050">°F</span>
<span class="t b" style="left:526.5px;top:792px;letter-spacing:0.078px;">Wattmeter-Messung</span>
<span class="t" style="left:528px;top:812px;letter-spacing:-0.056px;">Strom:</span>
<span class="t" style="left:665px;top:812px;letter-spacing:0.194px;">67.65</span>
<span class="t" style="left:700.1px;top:812px;letter-spacing:-0.004px;">A</span>
<span class="t" style="left:528px;top:833px;letter-spacing:0.216px;">Spannung:</span>
<span class="t" style="left:665px;top:833px;letter-spacing:0.194px;">35.38</span>
<span class="t" style="left:700.1px;top:833px;letter-spacing:-0.004px;">V</span>
<span class="t" style="left:528px;top:854px;letter-spacing:0.144px;">Leistung:</span>
<span class="t" style="left:658px;top:854px;letter-spacing:0.216px;">2393.5</span>
<span class="t" style="left:700.1px;top:854px;letter-spacing:-0.326px;">W</span>
<span class="t b" style="left:735.5px;top:589px;letter-spacing:-0.002px;">Propeller</span>
<span class="t" style="left:737px;top:608px;letter-spacing:0.117px;">Standschub:</span>
<span class="t" style="left:857.75px;top:608px;letter-spacing:0.326px;">9275</span>
<span class="t" style="left:889.8px;top:608px;letter-spacing:0.326px;">g</span>
<span class="t" style="left:854.75px;top:629px;letter-spacing:0.194px;">327.2</span>
<span class="t" style="left:889.8px;top:629px;letter-spacing:0.163px;">oz</span>
<span class="t" style="left:737px;top:650px;letter-spacing:0.197px;">Drehzahl*:</span>
<span class="t" style="left:857.75px;top:650px;letter-spacing:0.326px;">7473</span>
<span class="t" style="left:889.8px;top:650px;letter-spacing:0.133px;">U/min</span>
<span class="t" style="left:737px;top:671px;letter-spacing:0.152px;word-spacing:-0.486px;">Schub bei Abriss:</span>
<span class="t" style="left:881.75px;top:671px;letter-spacing:0.004px;">-</span>
<span class="t" style="left:889.8px;top:671px;letter-spacing:0.326px;">g</span>
<span class="t" style="left:881.75px;top:693px;letter-spacing:0.004px;">-</span>
<span class="t" style="left:889.8px;top:693px;letter-spacing:0.163px;">oz</span>
<span class="t" style="left:737px;top:714px;letter-spacing:0.139px;word-spacing:-0.473px;">Schub bei 0 km/h:</span>
<span class="t" style="left:857.75px;top:714px;letter-spacing:0.326px;">9275</span>
<span class="t" style="left:889.8px;top:714px;letter-spacing:0.326px;">g</span>
<span class="t" style="left:737px;top:735px;letter-spacing:0.201px;word-spacing:-0.535px;">Schub bei 0 mph:</span>
<span class="t" style="left:854.75px;top:735px;letter-spacing:0.194px;">327.2</span>
<span class="t" style="left:889.8px;top:735px;letter-spacing:0.163px;">oz</span>
<span class="t" style="left:737px;top:756px;letter-spacing:0.024px;word-spacing:-0.358px;">Pitch Geschw.:</span>
<span class="t" style="left:864.75px;top:756px;letter-spacing:0.326px;">103</span>
<span class="t" style="left:889.8px;top:756px;letter-spacing:-0.001px;">km/h</span>
<span class="t" style="left:871.75px;top:777px;letter-spacing:0.326px;">64</span>
<span class="t" style="left:889.8px;top:777px;letter-spacing:0.219px;">mph</span>
<span class="t" style="left:737px;top:799px;letter-spacing:0.026px;">Blattspitze:</span>
<span class="t" style="left:864.75px;top:799px;letter-spacing:0.326px;">680</span>
<span class="t" style="left:889.8px;top:799px;letter-spacing:-0.001px;">km/h</span>
<span class="t" style="left:864.75px;top:820px;letter-spacing:0.326px;">422</span>
<span class="t" style="left:889.8px;top:820px;letter-spacing:0.219px;">mph</span>
<span class="t" style="left:737px;top:841px;letter-spacing:0.087px;word-spacing:-0.421px;">spez. Schub:</span>
<span class="t" style="left:861.75px;top:841px;letter-spacing:0.161px;">3.89</span>
<span class="t" style="left:889.8px;top:841px;letter-spacing:-0.111px;">g/W</span>
<span class="t" style="left:861.75px;top:862px;letter-spacing:0.161px;">0.14</span>
<span class="t" style="left:889.8px;top:862px;letter-spacing:-0.083px;">oz/W</span>
<span class="t b" style="left:941.5px;top:589px;letter-spacing:0.109px;word-spacing:-0.443px;">Gesamter Antrieb</span>
<span class="t" style="left:943px;top:608px;letter-spacing:0.162px;">Komponenten:</span>
<span class="t" style="left:1099.05px;top:608px;letter-spacing:0.326px;">2393</span>
<span class="t" style="left:1131.1px;top:608px;letter-spacing:0.326px;">g</span>
<span class="t" style="left:1103.05px;top:629px;letter-spacing:0.161px;">84.4</span>
<span class="t" style="left:1131.1px;top:629px;letter-spacing:0.163px;">oz</span>
<span class="t" style="left:943px;top:650px;letter-spacing:0.109px;">Leistungs-Gewicht:</span>
<span class="t" style="left:1106.05px;top:650px;letter-spacing:0.326px;">156</span>
<span class="t" style="left:1131.1px;top:650px;letter-spacing:-0.083px;">W/kg</span>
<span class="t" style="left:1113.05px;top:671px;letter-spacing:0.326px;">71</span>
<span class="t" style="left:1131.1px;top:671px;letter-spacing:0.000px;">W/lb</span>
<span class="t" style="left:943px;top:693px;letter-spacing:0.093px;">Schub-Gewicht:</span>
<span class="t" style="left:1103.05px;top:693px;letter-spacing:0.161px;">0.58</span>
<span class="t" style="left:1131.1px;top:693px;letter-spacing:-0.004px;word-spacing:-0.330px;">: 1</span>
<span class="t" style="left:943px;top:714px;letter-spacing:-0.019px;word-spacing:-0.315px;">Strom @ max:</span>
<span class="t" style="left:1096.05px;top:714px;letter-spacing:0.194px;">67.65</span>
<span class="t" style="left:1131.1px;top:714px;letter-spacing:-0.004px;">A</span>
<span class="t" style="left:943px;top:735px;letter-spacing:0.048px;word-spacing:-0.382px;">P(in) @ max:</span>
<span class="t" style="left:1089.05px;top:735px;letter-spacing:0.216px;">2503.1</span>
<span class="t" style="left:1131.1px;top:735px;letter-spacing:-0.326px;">W</span>
<span class="t" style="left:943px;top:756px;letter-spacing:0.012px;word-spacing:-0.346px;">P(out) @ max:</span>
<span class="t" style="left:1089.05px;top:756px;letter-spacing:0.216px;">2117.0</span>
<span class="t" style="left:1131.1px;top:756px;letter-spacing:-0.326px;">W</span>
<span class="t" style="left:943px;top:777px;letter-spacing:0.105px;word-spacing:-0.439px;">Wirkungsgrad @ max:</span>
<span class="t" style="left:1103.05px;top:777px;letter-spacing:0.161px;">84.6</span>
<span class="t" style="left:1131.1px;top:777px;letter-spacing:0.330px;">%</span>
<span class="t" style="left:943px;top:799px;letter-spacing:0.119px;">Drehmoment:</span>
<span class="t" style="left:1103.05px;top:799px;letter-spacing:0.161px;">2.71</span>
<span class="t" style="left:1131.1px;top:799px;letter-spacing:0.169px;">Nm</span>
<span class="t" style="left:1120.05px;top:820px;letter-spacing:0.326px;">2</span>
<span class="t" style="left:1131.1px;top:820px;letter-spacing:-0.113px;">lbf.ft</span>
<span class="t b" style="left:1176.5px;top:589px;letter-spacing:-0.166px;">Modellflugzeug</span>
<span class="t" style="left:1178px;top:608px;letter-spacing:0.140px;">Abfluggewicht:</span>
<span class="t" style="left:1354.05px;top:608px;letter-spacing:0.326px;">16000</span>
<span class="t" style="left:1393.1px;top:608px;letter-spacing:0.326px;">g</span>
<span class="t" style="left:1358.05px;top:629px;letter-spacing:0.194px;">564.4</span>
<span class="t" style="left:1393.1px;top:629px;letter-spacing:0.163px;">oz</span>
<span class="t" style="left:1178px;top:650px;letter-spacing:0.172px;">Flächenbelastung:</span>
<span class="t" style="left:1368.05px;top:650px;letter-spacing:0.326px;">100</span>
<span class="t" style="left:1393.1px;top:650px;letter-spacing:0.065px;">g/dm²</span>
<span class="t" style="left:1365.05px;top:671px;letter-spacing:0.161px;">32.8</span>
<span class="t" style="left:1393.1px;top:671px;letter-spacing:-0.112px;">oz/ft²</span>
<span class="t" style="left:1178px;top:693px;letter-spacing:0.163px;word-spacing:-0.497px;">Kubische Flächenbel.:</span>
<span class="t" style="left:1372.05px;top:693px;letter-spacing:0.106px;">7.9</span>
<span class="t" style="left:1178px;top:714px;letter-spacing:0.190px;">Überziehgeschwind.:</span>
<span class="t" style="left:1375.05px;top:714px;letter-spacing:0.326px;">48</span>
<span class="t" style="left:1393.1px;top:714px;letter-spacing:-0.001px;">km/h</span>
<span class="t" style="left:1375.05px;top:735px;letter-spacing:0.326px;">30</span>
<span class="t" style="left:1393.1px;top:735px;letter-spacing:0.219px;">mph</span>
<span class="t" style="left:1178px;top:756px;letter-spacing:0.104px;word-spacing:-0.438px;">gesch. Horizontal-Geschw.:</span>
<span class="t" style="left:1368.05px;top:756px;letter-spacing:0.326px;">106</span>
<span class="t" style="left:1393.1px;top:756px;letter-spacing:-0.001px;">km/h</span>
<span class="t" style="left:1375.05px;top:777px;letter-spacing:0.326px;">66</span>
<span class="t" style="left:1393.1px;top:777px;letter-spacing:0.219px;">mph</span>
<span class="t" style="left:1178px;top:799px;letter-spacing:0.070px;word-spacing:-0.404px;">gesch. Vertikal-Geschw.:</span>
<span class="t" style="left:1385.05px;top:799px;letter-spacing:0.004px;">-</span>
<span class="t" style="left:1393.1px;top:799px;letter-spacing:-0.001px;">km/h</span>
<span class="t" style="left:1385.05px;top:820px;letter-spacing:0.004px;">-</span>
<span class="t" style="left:1393.1px;top:820px;letter-spacing:0.219px;">mph</span>
<span class="t" style="left:1178px;top:841px;letter-spacing:0.130px;word-spacing:-0.464px;">gesch. Steigleistung:</span>
<span class="t" style="left:1372.05px;top:841px;letter-spacing:0.106px;">6.9</span>
<span class="t" style="left:1393.1px;top:841px;letter-spacing:-0.110px;">m/s</span>
<span class="t" style="left:1361.05px;top:862px;letter-spacing:0.326px;">1349</span>
<span class="t" style="left:1393.1px;top:862px;letter-spacing:-0.056px;">ft/min</span>
</body></html>
